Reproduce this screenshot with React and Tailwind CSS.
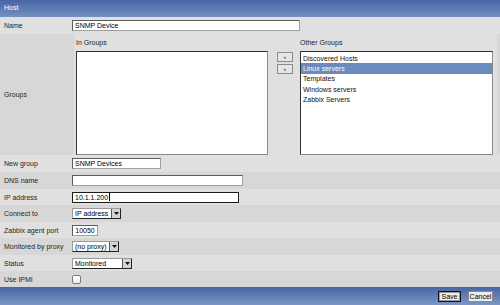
const font = { fontFamily: '"Liberation Sans", Arial, sans-serif' }

const TextInput = ({ width, value, focused }) => (
  <div
    className={
      'flex h-[11px] items-center bg-white pl-[2px] text-[7px] leading-none text-black ' +
      (focused
        ? 'border border-[#1a1a1a]'
        : 'border border-[#a0a0a0] border-t-[#5c5c5c] border-l-[#5c5c5c]')
    }
    style={{ width }}
  >
    {value}
    {focused && <span className="ml-[1px] h-[8px] w-px bg-black" />}
  </div>
)

const Select = ({ width, value }) => (
  <div
    className="flex h-[11px] items-stretch border border-[#9a9a9a] border-r-[#222] border-b-[#222] bg-white text-[7px] leading-none text-black"
    style={{ width }}
  >
    <div className="flex flex-1 items-center pl-[2px]">{value}</div>
    <div className="flex w-[9px] items-center justify-center border-l border-[#555] bg-[#d4d4d4]">
      <svg width="5" height="3" viewBox="0 0 5 3">
        <path d="M0 0h5L2.5 3z" fill="#111" />
      </svg>
    </div>
  </div>
)

const Row = ({ label, dark, h, children }) => (
  <div
    className={'flex items-center ' + (dark ? 'bg-[#d7d7d7]' : 'bg-[#e0e0e0]')}
    style={{ height: h }}
  >
    <div className="w-[72px] pl-[4px] text-[7px] leading-none text-[#1e1e1e]">{label}</div>
    {children}
  </div>
)

const otherGroups = ['Discovered Hosts', 'Linux servers', 'Templates', 'Windows servers', 'Zabbix Servers']

export default function App() {
  return (
    <div className="flex h-[305px] w-[500px] flex-col overflow-hidden bg-[#e0e0e0]" style={font}>
      <div className="flex h-[17px] items-center bg-gradient-to-b from-[#4665a3] to-[#7490c3] pl-[4px] text-[7px] text-white">
        Host
      </div>

      <Row label="Name" h={17}>
        <TextInput width={228} value="SNMP Device" />
      </Row>

      <div className="flex h-[121px] bg-[#d7d7d7]">
        <div className="flex w-[72px] items-center pl-[4px] text-[7px] leading-none text-[#1e1e1e]">Groups</div>
        <div className="ml-[2px] flex w-[423px] bg-[#e0e0e0] text-[7px] leading-none text-[#1e1e1e]">
          <div className="flex flex-col pl-[2px]">
            <div className="flex h-[17px] items-center">In Groups</div>
            <div className="h-[104px] w-[192px] border border-[#8a8a8a] border-t-[#333] border-l-[#333] bg-white" />
          </div>
          <div className="ml-[9px] flex flex-col gap-[2px] pt-[18px]">
            <div className="flex h-[10px] w-[16px] items-center justify-center border border-[#8c8c8c] bg-[#e6e6e6] text-[5px] text-[#333]">«</div>
            <div className="flex h-[10px] w-[16px] items-center justify-center border border-[#8c8c8c] bg-[#e6e6e6] text-[5px] text-[#333]">»</div>
          </div>
          <div className="ml-[7px] flex flex-col">
            <div className="flex h-[17px] items-center">Other Groups</div>
            <div className="flex h-[104px] w-[193px] flex-col border border-[#8a8a8a] border-t-[#333] border-l-[#333] bg-white pt-[1px]">
              {otherGroups.map((g, i) => (
                <div
                  key={g}
                  className={
                    'flex h-[10.4px] items-center pl-[2px] ' +
                    (i === 1 ? 'bg-[#6a8bbd] text-white' : 'text-[#111]')
                  }
                >
                  {g}
                </div>
              ))}
            </div>
          </div>
        </div>
      </div>

      <Row label="New group" h={17}>
        <TextInput width={89} value="SNMP Devices" />
      </Row>
      <Row label="DNS name" h={17} dark>
        <TextInput width={171} value="" />
      </Row>
      <Row label="IP address" h={16}>
        <TextInput width={167} value="10.1.1.200" focused />
      </Row>
      <Row label="Connect to" h={17} dark>
        <Select width={49} value="IP address" />
      </Row>
      <Row label="Zabbix agent port" h={16}>
        <div className="flex h-[11px] w-[26px] items-center justify-center border border-[#a0a0a0] border-t-[#5c5c5c] border-l-[#5c5c5c] bg-white text-[7px] leading-none text-black">
          10050
        </div>
      </Row>
      <Row label="Monitored by proxy" h={17} dark>
        <Select width={47} value="(no proxy)" />
      </Row>
      <Row label="Status" h={16}>
        <Select width={60} value="Monitored" />
      </Row>
      <Row label="Use IPMI" h={16} dark>
        <div className="h-[9px] w-[9px] rounded-[2px] border border-[#7a7a7a] bg-gradient-to-b from-white to-[#ececec]" />
      </Row>

      <div className="flex h-[18px] items-center justify-end gap-[7px] bg-gradient-to-b from-[#4866a4] to-[#7b95c6] pr-[7px]">
        <button className="flex h-[11px] w-[23px] items-center justify-center border border-[#111] bg-[#ececec] text-[7px] leading-none text-black shadow-[inset_0_0_0_1px_#9a9a9a]">
          Save
        </button>
        <button className="flex h-[11px] w-[25px] items-center justify-center border border-[#8a8a8a] bg-[#ececec] text-[7px] leading-none text-black">
          Cancel
        </button>
      </div>
    </div>
  )
}
